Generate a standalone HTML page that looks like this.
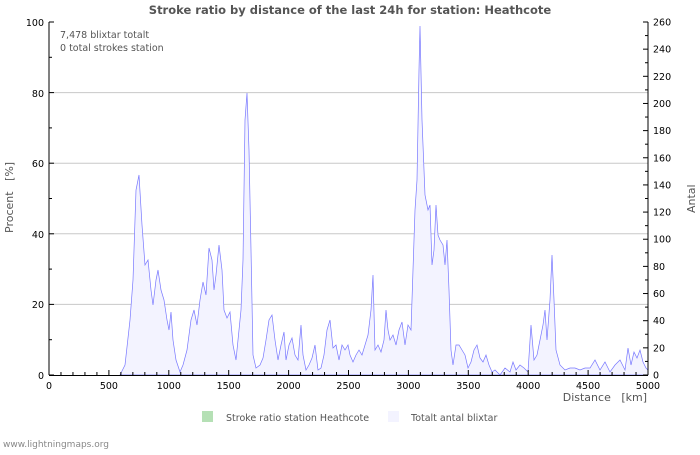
<!DOCTYPE html>
<html><head><style>
body{margin:0;background:#fff;width:700px;height:450px;overflow:hidden;font-family:"Liberation Sans","DejaVu Sans",sans-serif}
svg text{font-family:"DejaVu Sans","Liberation Sans",sans-serif}
</style></head><body>
<svg width="700" height="450" xmlns="http://www.w3.org/2000/svg">
<rect width="700" height="450" fill="#fff"/>
<text x="350" y="14" text-anchor="middle" font-size="11.5" font-weight="bold" fill="#555">Stroke ratio by distance of the last 24h for station: Heathcote</text>
<g stroke="#c8c8c8" stroke-width="1">
<line x1="49" x2="648" y1="304.4" y2="304.4"/><line x1="49" x2="648" y1="233.8" y2="233.8"/><line x1="49" x2="648" y1="163.2" y2="163.2"/><line x1="49" x2="648" y1="92.6" y2="92.6"/>
</g>
<polygon fill="#f3f3ff" stroke="#7777ff" stroke-width="0.7" points="120,375 125,365 130,320 133,280 136,190 139,175 142,225 145,265 148,260 151,290 153,305 156,280 158,270 161,290 164,300 167,320 169,330 171,312 173,340 176,360 180,372 183,365 187,350 191,320 194,310 197,325 200,300 203,282 206,295 209,248 212,260 214,290 216,275 219,245 222,270 224,310 227,318 230,312 233,345 236,360 238,340 241,310 243,260 245,120 247,93 249,150 251,250 253,355 256,368 260,365 263,358 266,340 269,320 272,315 275,340 278,360 281,345 284,332 286,360 289,345 292,338 295,355 298,360 301,325 303,355 306,370 309,365 312,358 315,345 318,370 321,368 324,355 327,330 330,320 333,348 336,345 339,360 342,345 345,350 348,345 350,355 353,362 356,355 359,350 362,355 365,345 368,335 371,310 373,275 375,350 378,345 381,352 384,340 386,310 388,330 390,340 393,335 396,345 399,330 402,322 405,345 408,325 411,330 413,270 415,210 417,180 419,70 420,26 422,120 425,195 428,210 430,205 432,265 434,250 436,205 438,235 440,240 443,245 445,265 447,240 449,290 451,350 453,365 456,345 459,345 462,350 465,355 468,368 471,362 474,350 477,345 480,358 483,362 486,355 489,365 492,372 495,370 500,375 505,368 510,372 513,362 516,370 520,365 524,368 528,372 531,325 534,360 537,355 540,340 543,325 545,310 547,340 550,300 552,255 554,300 556,350 560,365 565,370 570,368 575,368 580,370 585,368 590,368 595,360 600,370 605,362 610,372 615,365 620,360 625,370 628,348 631,365 634,352 637,358 640,350 643,362 646,368 648,370 648,375"/>
<g stroke="#000" stroke-width="1" fill="none">
<line x1="49" y1="22" x2="49" y2="375"/>
<line x1="648" y1="22" x2="648" y2="375"/>
<line x1="49" y1="375.5" x2="648" y2="375.5"/>
</g>
<g stroke="#000" stroke-width="1" id="ticks">
<line x1="49" x2="54" y1="375" y2="375"/><line x1="49" x2="52" y1="339.7" y2="339.7"/><line x1="49" x2="54" y1="304.4" y2="304.4"/><line x1="49" x2="52" y1="269.1" y2="269.1"/><line x1="49" x2="54" y1="233.8" y2="233.8"/><line x1="49" x2="52" y1="198.5" y2="198.5"/><line x1="49" x2="54" y1="163.2" y2="163.2"/><line x1="49" x2="52" y1="127.9" y2="127.9"/><line x1="49" x2="54" y1="92.6" y2="92.6"/><line x1="49" x2="52" y1="57.3" y2="57.3"/><line x1="49" x2="54" y1="22" y2="22"/>
</g>
<g font-size="9.5" fill="#000" text-anchor="end">
<text x="44" y="379">0</text><text x="44" y="308">20</text><text x="44" y="238">40</text><text x="44" y="167">60</text><text x="44" y="97">80</text><text x="44" y="26">100</text>
</g>
<g id="rt" stroke="#000"></g>
<g id="rl" font-size="9.5" fill="#000"></g>
<g id="xt" stroke="#000"></g>
<g id="xl" font-size="9.5" fill="#000" text-anchor="middle"></g>
<text x="60" y="38" font-size="9.5" fill="#555">7,478 blixtar totalt</text>
<text x="60" y="51" font-size="9.5" fill="#555">0 total strokes station</text>
<text x="647" y="401" font-size="11" fill="#555" text-anchor="end">Distance&#160;&#160;&#160;[km]</text>
<text transform="translate(13,233) rotate(-90)" font-size="11" fill="#555">Procent&#160;&#160;&#160;[%]</text>
<text transform="translate(695,213) rotate(-90)" font-size="11" fill="#555">Antal</text>
<rect x="202" y="411" width="11" height="11" fill="#b5e0b5"/>
<text x="226" y="421" font-size="9.5" fill="#555">Stroke ratio station Heathcote</text>
<rect x="388" y="411" width="11" height="11" fill="#f3f3ff"/>
<text x="411" y="421" font-size="9.5" fill="#555">Totalt antal blixtar</text>
<text x="3" y="447" font-size="9" fill="#888">www.lightningmaps.org</text>
</svg>
<script>
var ns="http://www.w3.org/2000/svg";
function el(p,t,a,tx){var e=document.createElementNS(ns,t);for(var k in a)e.setAttribute(k,a[k]);if(tx!=null)e.textContent=tx;document.getElementById(p).appendChild(e);}
for(var v=0;v<=260;v+=10){var y=375-v*353/260;el("rt","line",{x1:648-(v%20?3:5),x2:648,y1:y,y2:y});if(v%20==0)el("rl","text",{x:653,y:y+3.5},v);}
for(var d=0;d<=5000;d+=100){var x=49+d*599/5000;el("xt","line",{x1:x,x2:x,y1:375,y2:375-(d%500?3:5)});if(d%500==0)el("xl","text",{x:x,y:389},d);}
</script>
</body></html>
